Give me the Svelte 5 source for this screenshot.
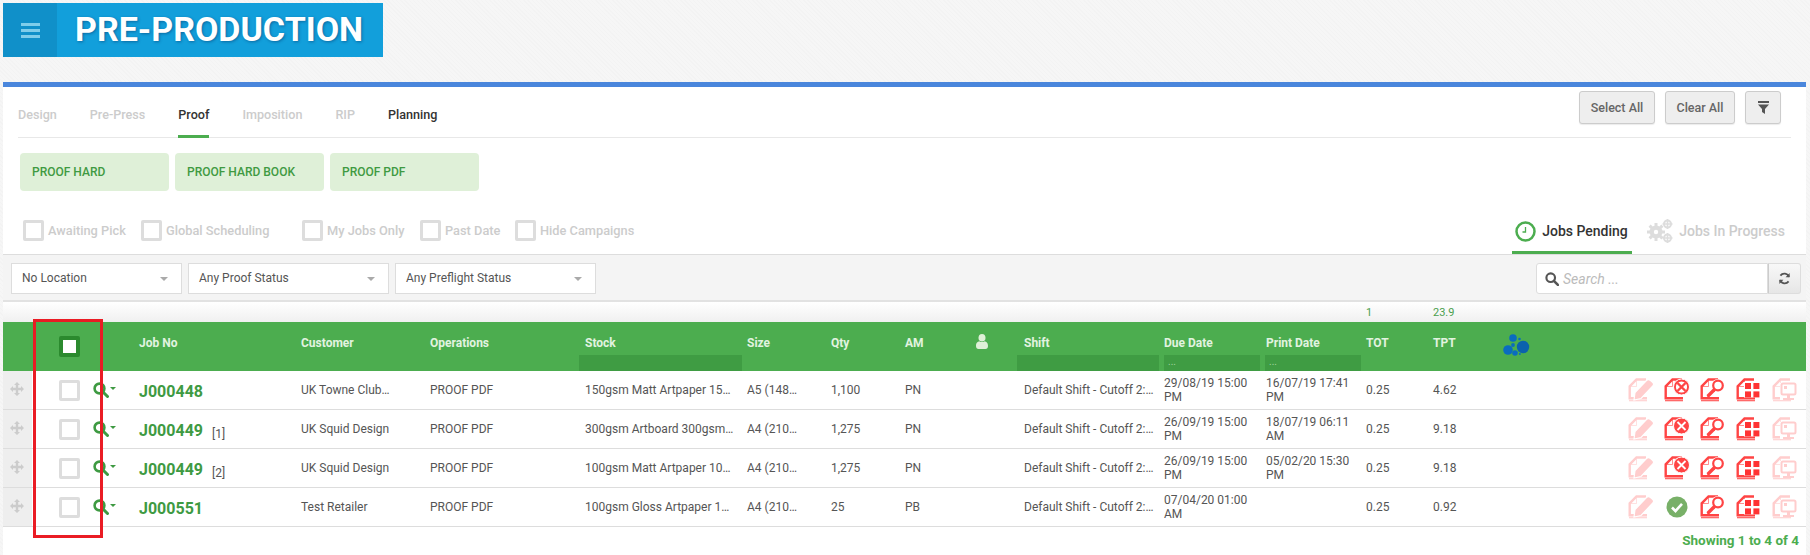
<script>
  const tabs = [
    { label: 'Design' }, { label: 'Pre-Press' }, { label: 'Proof', active: true },
    { label: 'Imposition' }, { label: 'RIP' }, { label: 'Planning', dark: true }
  ];
  const chips = ['PROOF HARD', 'PROOF HARD BOOK', 'PROOF PDF'];
  const checks = [
    { label: 'Awaiting Pick', cls: 'ck1' }, { label: 'Global Scheduling', cls: 'ck2' },
    { label: 'My Jobs Only', cls: 'ck3' }, { label: 'Past Date', cls: 'ck4' }, { label: 'Hide Campaigns', cls: 'ck5' }
  ];
  const selects = [
    { label: 'No Location', cls: 's1' }, { label: 'Any Proof Status', cls: 's2' }, { label: 'Any Preflight Status', cls: 's2' }
  ];
  const rows = [
    { job: 'J000448', sub: '', cust: 'UK Towne Club…', stock: '150gsm Matt Artpaper 15…', size: 'A5 (148…', qty: '1,100', am: 'PN', due: ['29/08/19 15:00', 'PM'], print: ['16/07/19 17:41', 'PM'], tpt: '4.62', state: 'ring' },
    { job: 'J000449', sub: '[1]', cust: 'UK Squid Design', stock: '300gsm Artboard 300gsm…', size: 'A4 (210…', qty: '1,275', am: 'PN', due: ['26/09/19 15:00', 'PM'], print: ['18/07/19 06:11', 'AM'], tpt: '9.18', state: 'solid' },
    { job: 'J000449', sub: '[2]', cust: 'UK Squid Design', stock: '100gsm Matt Artpaper 10…', size: 'A4 (210…', qty: '1,275', am: 'PN', due: ['26/09/19 15:00', 'PM'], print: ['05/02/20 15:30', 'PM'], tpt: '9.18', state: 'solid' },
    { job: 'J000551', sub: '', cust: 'Test Retailer', stock: '100gsm Gloss Artpaper 1…', size: 'A4 (210…', qty: '25', am: 'PB', due: ['07/04/20 01:00', 'AM'], print: null, tpt: '0.92', state: 'ok' }
  ];
</script>

{#snippet doc()}
  <path d="M18 1.5 H8.5 L1.7 8.3 V20.3 H19" fill="none" stroke="currentColor" stroke-width="2.4"/>
  <path d="M1 22.6 H19" stroke="currentColor" stroke-width="1.4" opacity=".8"/>
  <path d="M8.5 2.5 V8.5 H2.5" fill="none" stroke="currentColor" stroke-width="1" opacity=".6"/>
{/snippet}

<div class="page">
  <header class="brand">
    <div class="burger"><span></span><span></span><span></span></div>
    <h1>PRE-PRODUCTION</h1>
  </header>

  <main class="panel">
    <div class="top">
      <nav class="tabs">
        {#each tabs as t}
          <span class="tab" class:active={t.active} class:dark={t.dark}>{t.label}</span>
        {/each}
      </nav>
      <div class="btns">
        <button class="btn b1">Select All</button>
        <button class="btn b2">Clear All</button>
        <button class="btn b3" aria-label="Filter">
          <svg width="11" height="13" viewBox="0 0 11 13"><rect x="0" y="0" width="11" height="2" fill="#555"/><path d="M0 3.5 H11 L7 8 V13 L4 11 V8 Z" fill="#555"/></svg>
        </button>
      </div>
    </div>

    <div class="chips">
      {#each chips as c}<div class="chip">{c}</div>{/each}
    </div>

    <div class="optrow">
      <div class="opts">
        {#each checks as c}
          <div class="opt {c.cls}"><span class="box"></span>{c.label}</div>
        {/each}
      </div>
      <div class="views">
        <div class="view on">
          <svg width="21" height="21" viewBox="0 0 21 21"><circle cx="10.5" cy="10.5" r="9" fill="#fff" stroke="#4cad4f" stroke-width="2.5"/><path d="M10.5 6 V11 H7.5" fill="none" stroke="#4cad4f" stroke-width="1.3"/></svg>
          Jobs Pending
        </div>
        <div class="view off">
          <svg width="26" height="24" viewBox="0 0 26 24" fill="#ddd">
            <circle cx="9" cy="13" r="6.5"/><circle cx="9" cy="13" r="2.2" fill="#fff"/>
            <g stroke="#ddd" stroke-width="3"><path d="M9 4 V22 M0 13 H18 M2.6 6.6 L15.4 19.4 M15.4 6.6 L2.6 19.4"/></g>
            <circle cx="9" cy="13" r="2.2" fill="#fff"/>
            <circle cx="20.5" cy="5" r="3.5" fill="none" stroke="#ddd" stroke-width="2"/>
            <circle cx="20.5" cy="19" r="3.5" fill="none" stroke="#ddd" stroke-width="2"/>
            <g stroke="#ddd" stroke-width="1.6"><path d="M20.5 0 V10 M15.5 5 H25.5 M20.5 14 V24 M15.5 19 H25.5"/></g>
          </svg>
          Jobs In Progress
        </div>
      </div>
    </div>

    <div class="filters">
      {#each selects as s}
        <div class="sel {s.cls}">{s.label}<i class="caret"></i></div>
      {/each}
      <div class="search">
        <div class="sinput">
          <svg width="14" height="14" viewBox="0 0 13 13"><circle cx="5.3" cy="5.3" r="4" fill="none" stroke="#555" stroke-width="2"/><path d="M8.2 8.2 L12 12" stroke="#555" stroke-width="2.4" stroke-linecap="round"/></svg>
          <span>Search ...</span>
        </div>
        <div class="sbtn">
          <svg width="13" height="13" viewBox="0 0 13 13" fill="none" stroke="#555" stroke-width="1.8"><path d="M11 4.8 A5 5 0 0 0 2.4 3.6"/><path d="M2 8.2 A5 5 0 0 0 10.6 9.4"/><path d="M11.6 1 V5.2 H7.6 Z" stroke-width="0" fill="#555"/><path d="M1.4 12 V7.8 H5.4 Z" stroke-width="0" fill="#555"/></svg>
        </div>
      </div>
    </div>

    <div class="grid stats">
      <div class="c-tot">1</div>
      <div class="c-tpt">23.9</div>
    </div>

    <div class="grid head">
      <div class="c-sel hcheck"><span></span></div>
      <div class="c-job">Job No</div>
      <div>Customer</div>
      <div>Operations</div>
      <div class="hf">Stock<i class="flt f-stock"></i></div>
      <div>Size</div>
      <div>Qty</div>
      <div>AM</div>
      <div class="person">
        <svg width="12" height="15" viewBox="0 0 12 15" fill="#dff0d8"><ellipse cx="6" cy="3.8" rx="3.5" ry="3.8"/><path d="M0 12 C0 8.5 2 7.5 3.2 7.2 C4.6 8.4 7.4 8.4 8.8 7.2 C10 7.5 12 8.5 12 12 C12 14 11 15 9.5 15 H2.5 C1 15 0 14 0 12 Z"/></svg>
      </div>
      <div class="hf">Shift<i class="flt f-shift"></i></div>
      <div class="hf">Due Date<i class="flt f-date">...</i></div>
      <div class="hf">Print Date<i class="flt f-print">...</i></div>
      <div>TOT</div>
      <div>TPT</div>
      <div class="logo">
        <svg width="28" height="24" viewBox="0 0 28 24" fill="#0a6cbf">
          <circle cx="20" cy="14" r="6.2" fill="#0b62ad"/><circle cx="10" cy="5" r="3.8"/><circle cx="5" cy="17" r="4.8"/><circle cx="12" cy="20" r="2.8"/><circle cx="10" cy="12" r="1.9"/><circle cx="16.5" cy="6" r="1.3"/><circle cx="16.8" cy="21" r="1"/>
        </svg>
      </div>
    </div>

    {#each rows as r}
      <div class="grid row">
        <div class="drag">
          <svg width="14" height="14" viewBox="0 0 14 14" fill="#ccc"><path d="M7 0 L10 3 H8.2 V5.8 H11 V4 L14 7 L11 10 V8.2 H8.2 V11 H10 L7 14 L4 11 H5.8 V8.2 H3 V10 L0 7 L3 4 V5.8 H5.8 V3 H4 Z"/></svg>
        </div>
        <div class="c-sel"><span class="box"></span></div>
        <div class="find">
          <svg width="16" height="16" viewBox="0 0 16 16"><circle cx="6.5" cy="6.5" r="4.9" fill="none" stroke="#3e9a42" stroke-width="2.6"/><path d="M10 10 L14.5 14.5" stroke="#3e9a42" stroke-width="3" stroke-linecap="round"/></svg>
          <i class="mini"></i>
        </div>
        <div class="jobno"><b>{r.job}</b>{#if r.sub}<small>{r.sub}</small>{/if}</div>
        <div>{r.cust}</div>
        <div>PROOF PDF</div>
        <div>{r.stock}</div>
        <div>{r.size}</div>
        <div>{r.qty}</div>
        <div>{r.am}</div>
        <div></div>
        <div>Default Shift - Cutoff 2:…</div>
        <div class="two">{r.due[0]}<br />{r.due[1]}</div>
        <div class="two">{#if r.print}{r.print[0]}<br />{r.print[1]}{/if}</div>
        <div>0.25</div>
        <div>{r.tpt}</div>
        <div class="acts">
          <svg class="pale" width="26" height="24" viewBox="0 0 26 24">
            {@render doc()}
            <path d="M7 14.5 L18.5 2.5 C19.5 1.5 21 1.3 22.5 2.5 L24.6 4.4 C25.8 5.6 25.8 7 24.8 8 L13 20.5 L6 22 Z" fill="currentColor" stroke="#fff" stroke-width="1.2"/>
          </svg>
          {#if r.state === 'ok'}
            <svg width="26" height="24" viewBox="0 0 26 24"><circle cx="13" cy="12" r="10.5" fill="#78b068"/><path d="M8 12.5 L11.5 16 L18 8.8" fill="none" stroke="#fff" stroke-width="2.6"/></svg>
          {:else}
            <svg class="red" width="26" height="24" viewBox="0 0 26 24">
              {@render doc()}
              <circle cx="17.5" cy="9" r="8" fill="currentColor" stroke="#fff" stroke-width="1"/>
              {#if r.state === 'ring'}
                <circle cx="17.5" cy="9" r="5.6" fill="#fff"/>
                <path d="M13.5 5 L21.5 13 M21.5 5 L13.5 13" stroke="#f44" stroke-width="2.4"/>
              {:else}
                <path d="M13.5 5 L21.5 13 M21.5 5 L13.5 13" stroke="#fff" stroke-width="1.8"/>
              {/if}
            </svg>
          {/if}
          <svg class="red" width="26" height="24" viewBox="0 0 26 24">
            {@render doc()}
            <circle cx="18" cy="7.5" r="6.6" fill="#fff"/>
            <path d="M5 19 L14 9 L17 12 L9 19 Z" fill="#fff"/>
            <circle cx="18" cy="7.5" r="4.8" fill="none" stroke="currentColor" stroke-width="2.2"/>
            <path d="M14 12 L8.5 17.5" stroke="currentColor" stroke-width="3.4" stroke-linecap="round"/>
          </svg>
          <svg class="red" width="26" height="24" viewBox="0 0 26 24">
            {@render doc()}
            <rect x="8" y="4" width="17" height="15.5" fill="#fff"/>
            <g fill="#f33"><rect x="9" y="5" width="6" height="6"/><rect x="17.4" y="5" width="6" height="6"/><rect x="9" y="13.4" width="6" height="6"/><rect x="17.4" y="13.4" width="6" height="6"/></g>
          </svg>
          <svg class="pale" width="26" height="24" viewBox="0 0 26 24">
            {@render doc()}
            <rect x="8" y="5" width="17" height="17" fill="#fff"/>
            <rect x="9.5" y="5.5" width="14" height="11" rx="1.5" fill="none" stroke="currentColor" stroke-width="2"/>
            <rect x="12" y="8" width="3" height="3" fill="currentColor"/>
            <path d="M15 17 H18 V20 H22 V22 H11 V20 H15 Z" fill="currentColor"/>
          </svg>
        </div>
      </div>
    {/each}

    <footer class="foot">Showing 1 to 4 of 4</footer>
    <div class="mark"></div>
  </main>
</div>

<style>
  :global(body) { margin: 0; background: #f6f6f6 repeating-linear-gradient(45deg, rgba(0,0,0,.012) 0 1px, transparent 1px 3px); }
  .page { height: 555px; overflow: hidden; box-sizing: border-box; padding: 3px 4px 0 3px; font: 12px/14px Roboto, "Liberation Sans", sans-serif; color: #555; }

  .brand { display: flex; width: 380px; height: 54px; background: #129fdb; }
  .burger { width: 54px; background: #1090c9; display: flex; flex-direction: column; justify-content: center; align-items: center; gap: 3px; }
  .burger span { width: 19px; height: 3px; background: #7fcdea; }
  h1 { margin: 0 0 0 18px; font: 700 34px/52px Roboto, "Liberation Sans", sans-serif; color: #fff; text-shadow: 1px 1px 3px rgba(0,40,90,.45); }

  .panel { position: relative; margin-top: 25px; height: 468px; background: #fff; border-top: 5px solid #4a86dc; }

  .top { display: flex; justify-content: space-between; align-items: flex-start; height: 50px; margin: 0 15px; border-bottom: 1px solid #e8e8e8; }
  .tabs { display: flex; gap: 33px; height: 50px; }
  .tab { display: flex; align-items: flex-end; box-sizing: border-box; height: 51px; padding-bottom: 13px; font-size: 12.6px; font-weight: 500; color: #ccc; border-bottom: 3px solid transparent; }
  .tab.active { color: #333; border-bottom-color: #4cad4f; }
  .tab.dark { color: #333; }
  .btns { display: flex; gap: 10px; padding: 4px 10px 0 0; }
  .btn { height: 33px; padding: 0; background: #eee; border: 1px solid #ccc; border-radius: 3px; font: 500 12.5px Roboto, sans-serif; color: #666; box-shadow: 0 1px 1px rgba(0,0,0,.08); }
  .b1 { width: 76px; } .b2 { width: 70px; } .b3 { width: 36px; display: flex; align-items: center; justify-content: center; }

  .chips { display: flex; gap: 6px; margin: 15px 0 0 17px; }
  .chip { box-sizing: border-box; width: 149px; height: 38px; padding-left: 12px; background: #dff0d8; border-radius: 4px; font-size: 12px; font-weight: 500; line-height: 39px; color: #3f9a42; }

  .optrow { display: flex; justify-content: space-between; height: 64px; border-bottom: 1px solid #ddd; box-sizing: border-box; }
  .opts { display: flex; padding: 29px 0 0 20px; align-items: flex-start; }
  .opt { display: flex; align-items: center; gap: 4px; height: 21px; font-size: 12.8px; font-weight: 500; color: #ccc; }
  .ck1 { width: 118px; } .ck2 { width: 161px; } .ck3 { width: 118px; } .ck4 { width: 95px; }
  .box { display: block; box-sizing: border-box; width: 21px; height: 21px; border: 3px solid #ddd; border-radius: 2px; background: #fff; }

  .views { display: flex; margin-right: 21px; gap: 15px; }
  .view { display: flex; align-items: center; gap: 6px; box-sizing: border-box; height: 63px; padding-top: 17px; font-size: 14px; font-weight: 500; }
  .view.on { width: 120px; padding-left: 3px; color: #333; border-bottom: 3px solid #4cad4f; padding-top: 20px; }
  .view.off { color: #ccc; }

  .filters { display: flex; align-items: center; gap: 6px; box-sizing: border-box; height: 45px; padding: 2px 5px 0 8px; background: #f4f4f4; }
  .sel { position: relative; box-sizing: border-box; height: 31px; padding-left: 10px; line-height: 29px; background: #fff; border: 1px solid #ddd; color: #555; }
  .s1 { width: 171px; } .s2 { width: 201px; }
  .caret { position: absolute; right: 13px; top: 13px; border: 4px solid transparent; border-top-color: #aaa; border-bottom: 0; }
  .search { display: flex; margin-left: auto; width: 265px; height: 31px; }
  .sinput { flex: 1; display: flex; align-items: center; gap: 4px; padding-left: 8px; background: #fff; border: 1px solid #ddd; border-radius: 3px 0 0 3px; color: #bbb; font-style: italic; font-size: 14px; }
  .sbtn { width: 31px; display: flex; align-items: center; justify-content: center; background: linear-gradient(#f8f8f8, #e6e6e6); border: 1px solid #ddd; border-left-color: #ccc; border-radius: 0 3px 3px 0; }

  .grid { display: grid; grid-template-columns: 29px 61px 46px 162px 129px 155px 162px 84px 74px 70px 49px 140px 102px 100px 67px 57px 1fr; }

  .stats { box-sizing: border-box; height: 22px; border-top: 2px solid #e2e2e2; background: linear-gradient(#fff, #f0f0f0); color: #4a9f4d; font-size: 11px; line-height: 21px; }
  .c-tot { grid-column: 15; } .c-tpt { grid-column: 16; }

  .head { height: 49px; background: #4cad4f; color: #e2f3e0; font-weight: 700; line-height: 14px; }
  .head > div { padding-top: 14px; position: relative; }
  .hcheck { grid-column: 2; padding: 0 !important; display: flex; align-items: center; }
  .hcheck span { display: block; box-sizing: border-box; width: 21px; height: 21px; margin-left: 27px; background: #fff; border: 4px solid #2b8a2e; border-radius: 2px; }
  .c-job { grid-column: 4; }
  .hf { display: flex; flex-direction: column; justify-content: space-between; }
  .flt { display: block; height: 16px; background: #3f9c43; color: #9fd4a0; font-style: normal; font-weight: 400; font-size: 10px; padding-left: 4px; box-sizing: border-box; }
  .f-stock { margin-left: -6px; width: 163px; }
  .f-shift { margin-left: -7px; width: 142px; }
  .f-date { width: 96px; }
  .f-print { margin-left: -1px; width: 96px; }
  .person { padding: 12px 0 0 1px !important; }
  .logo { padding: 11px 0 0 13px !important; }

  .row { height: 39px; box-sizing: border-box; border-bottom: 1px solid #ddd; align-items: center; line-height: 14px; }
  .row > div { white-space: nowrap; }
  .drag { align-self: stretch; display: flex; align-items: center; justify-content: center; background: #eee; padding-right: 1px; padding-bottom: 3px; }
  .c-sel .box { margin-left: 27px; }
  .find { display: flex; align-items: center; gap: 1px; }
  .mini { margin-top: -4px; border: 3px solid transparent; border-top-color: #3e9a42; border-bottom: 0; }
  .jobno { position: relative; top: 2px; }
  .jobno b { font-size: 16px; color: #3e9a42; }
  .jobno small { margin-left: 9px; font-size: 12px; position: relative; top: 2px; }
  .two { line-height: 14px; }
  .acts { display: flex; justify-content: flex-end; gap: 10px; padding-right: 8px; }
  .pale { color: #ffcdcd; }
  .red { color: #f44; }

  .foot { padding: 5px 7px 0 0; text-align: right; font-size: 13.5px; font-weight: 700; line-height: 16px; color: #4cad4f; }
  .mark { position: absolute; left: 30px; top: 232px; width: 70px; height: 219px; box-sizing: border-box; border: 3px solid #ea1c24; pointer-events: none; }
</style>
